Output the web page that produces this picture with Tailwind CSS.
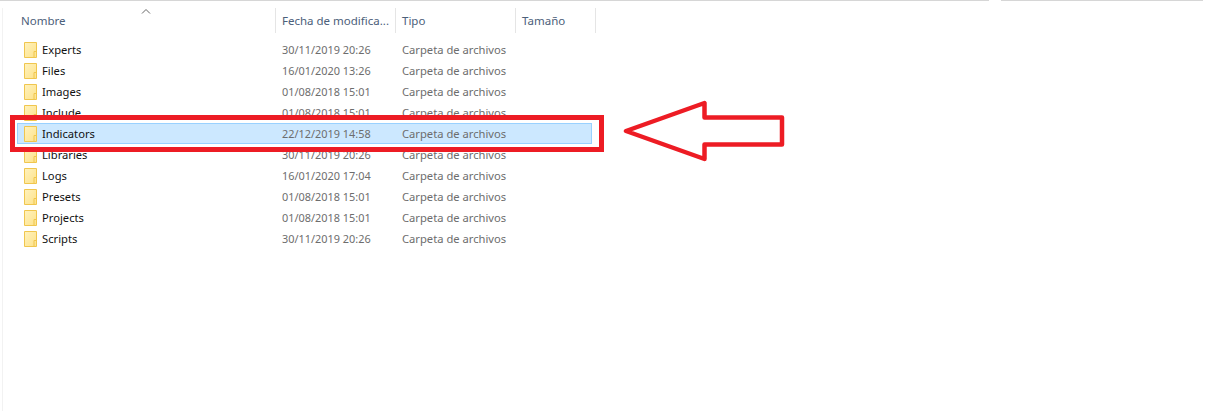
<!DOCTYPE html>
<html><head><script src="https://cdn.jsdelivr.net/npm/@tailwindcss/browser@4"></script></head>
<body class="bg-white">
<div class="relative w-[1216px] h-[411px] overflow-hidden bg-white font-['Noto_Sans',sans-serif] text-[11.5px] leading-[16px]">
  <svg class="absolute" width="0" height="0"><defs><linearGradient id="fg" x1="0" y1="0" x2="1" y2="1"><stop offset="0" stop-color="#fff2bd"/><stop offset="1" stop-color="#fde28a"/></linearGradient></defs></svg>
  <div class="flex h-[1px]">
    <div class="w-[989px] bg-[#d6d6d6]"></div>
    <div class="w-[12px]"></div>
    <div class="w-[202px] bg-[#d6d6d6]"></div>
  </div>
  <div class="ml-[2px] h-[410px] border-l border-[#f2f2f2]">
    <div class="relative flex h-[25px] mt-[7px] text-[#4c607a]">
      <svg class="absolute left-[138px] top-[0px]" width="10" height="6" viewBox="0 0 10 6" fill="none" stroke="#666"><path d="M1 5.500 L5 1.500 L9 5.500"/></svg>
      <div class="w-[273px] pl-[18px] pt-[5px] border-r border-[#e5e5e5]">Nombre</div>
      <div class="w-[120px] pl-[6px] pt-[5px] border-r border-[#e5e5e5]">Fecha de modifica...</div>
      <div class="w-[120px] pl-[6px] pt-[5px] border-r border-[#e5e5e5]">Tipo</div>
      <div class="w-[80px] pl-[6px] pt-[5px] border-r border-[#e5e5e5]">Tamaño</div>
    </div>
    <div class="mt-[6px] text-[#6d6d6d] text-[11.2px]">
      <div class="flex items-center h-[21px] w-[575px] ml-[14px]">
        <svg class="ml-[7px] mr-[5px] shrink-0" width="13" height="16" viewBox="0 0 13 16"><path d="M.5 .5H12.500V15.500H.5Z" fill="url(#fg)" stroke="#f0c64e"/><path d="M10 15.500V9.500H12.500" fill="none" stroke="#f0c64e"/></svg>
        <div class="w-[240px] text-[#111]">Experts</div><div class="w-[120px] text-[10.9px]">30/11/2019 20:26</div><div>Carpeta de archivos</div>
      </div>
      <div class="flex items-center h-[21px] w-[575px] ml-[14px]">
        <svg class="ml-[7px] mr-[5px] shrink-0" width="13" height="16" viewBox="0 0 13 16"><path d="M.5 .5H12.500V15.500H.5Z" fill="url(#fg)" stroke="#f0c64e"/><path d="M10 15.500V9.500H12.500" fill="none" stroke="#f0c64e"/></svg>
        <div class="w-[240px] text-[#111]">Files</div><div class="w-[120px] text-[10.9px]">16/01/2020 13:26</div><div>Carpeta de archivos</div>
      </div>
      <div class="flex items-center h-[21px] w-[575px] ml-[14px]">
        <svg class="ml-[7px] mr-[5px] shrink-0" width="13" height="16" viewBox="0 0 13 16"><path d="M.5 .5H12.500V15.500H.5Z" fill="url(#fg)" stroke="#f0c64e"/><path d="M10 15.500V9.500H12.500" fill="none" stroke="#f0c64e"/></svg>
        <div class="w-[240px] text-[#111]">Images</div><div class="w-[120px] text-[10.9px]">01/08/2018 15:01</div><div>Carpeta de archivos</div>
      </div>
      <div class="flex items-center h-[21px] w-[575px] ml-[14px]">
        <svg class="ml-[7px] mr-[5px] shrink-0" width="13" height="16" viewBox="0 0 13 16"><path d="M.5 .5H12.500V15.500H.5Z" fill="url(#fg)" stroke="#f0c64e"/><path d="M10 15.500V9.500H12.500" fill="none" stroke="#f0c64e"/></svg>
        <div class="w-[240px] text-[#111]">Include</div><div class="w-[120px] text-[10.9px]">01/08/2018 15:01</div><div>Carpeta de archivos</div>
      </div>
      <div class="flex items-center h-[21px] w-[575px] ml-[14px] bg-[#cce8ff] outline outline-1 -outline-offset-1 outline-[#99d1ff]">
        <svg class="ml-[7px] mr-[5px] shrink-0" width="13" height="16" viewBox="0 0 13 16"><path d="M.5 .5H12.500V15.500H.5Z" fill="url(#fg)" stroke="#f0c64e"/><path d="M10 15.500V9.500H12.500" fill="none" stroke="#f0c64e"/></svg>
        <div class="w-[240px] text-[#111]">Indicators</div><div class="w-[120px] text-[10.9px]">22/12/2019 14:58</div><div>Carpeta de archivos</div>
      </div>
      <div class="flex items-center h-[21px] w-[575px] ml-[14px]">
        <svg class="ml-[7px] mr-[5px] shrink-0" width="13" height="16" viewBox="0 0 13 16"><path d="M.5 .5H12.500V15.500H.5Z" fill="url(#fg)" stroke="#f0c64e"/><path d="M10 15.500V9.500H12.500" fill="none" stroke="#f0c64e"/></svg>
        <div class="w-[240px] text-[#111]">Libraries</div><div class="w-[120px] text-[10.9px]">30/11/2019 20:26</div><div>Carpeta de archivos</div>
      </div>
      <div class="flex items-center h-[21px] w-[575px] ml-[14px]">
        <svg class="ml-[7px] mr-[5px] shrink-0" width="13" height="16" viewBox="0 0 13 16"><path d="M.5 .5H12.500V15.500H.5Z" fill="url(#fg)" stroke="#f0c64e"/><path d="M10 15.500V9.500H12.500" fill="none" stroke="#f0c64e"/></svg>
        <div class="w-[240px] text-[#111]">Logs</div><div class="w-[120px] text-[10.9px]">16/01/2020 17:04</div><div>Carpeta de archivos</div>
      </div>
      <div class="flex items-center h-[21px] w-[575px] ml-[14px]">
        <svg class="ml-[7px] mr-[5px] shrink-0" width="13" height="16" viewBox="0 0 13 16"><path d="M.5 .5H12.500V15.500H.5Z" fill="url(#fg)" stroke="#f0c64e"/><path d="M10 15.500V9.500H12.500" fill="none" stroke="#f0c64e"/></svg>
        <div class="w-[240px] text-[#111]">Presets</div><div class="w-[120px] text-[10.9px]">01/08/2018 15:01</div><div>Carpeta de archivos</div>
      </div>
      <div class="flex items-center h-[21px] w-[575px] ml-[14px]">
        <svg class="ml-[7px] mr-[5px] shrink-0" width="13" height="16" viewBox="0 0 13 16"><path d="M.5 .5H12.500V15.500H.5Z" fill="url(#fg)" stroke="#f0c64e"/><path d="M10 15.500V9.500H12.500" fill="none" stroke="#f0c64e"/></svg>
        <div class="w-[240px] text-[#111]">Projects</div><div class="w-[120px] text-[10.9px]">01/08/2018 15:01</div><div>Carpeta de archivos</div>
      </div>
      <div class="flex items-center h-[21px] w-[575px] ml-[14px]">
        <svg class="ml-[7px] mr-[5px] shrink-0" width="13" height="16" viewBox="0 0 13 16"><path d="M.5 .5H12.500V15.500H.5Z" fill="url(#fg)" stroke="#f0c64e"/><path d="M10 15.500V9.500H12.500" fill="none" stroke="#f0c64e"/></svg>
        <div class="w-[240px] text-[#111]">Scripts</div><div class="w-[120px] text-[10.9px]">30/11/2019 20:26</div><div>Carpeta de archivos</div>
      </div>
    </div>
  </div>
  <div class="absolute left-[10px] top-[115px] w-[594px] h-[37px] border-[5px] border-[#ed1c24]"></div>
  <svg class="absolute left-0 top-0" width="1216" height="411" viewBox="0 0 1216 411" fill="none"><path d="M626 131 L704.500 103 V117.500 H782 V144.500 H704.500 V159 Z" stroke="#ed1c24" stroke-width="4.500" stroke-linejoin="round"/></svg>
</div>
</body></html>
